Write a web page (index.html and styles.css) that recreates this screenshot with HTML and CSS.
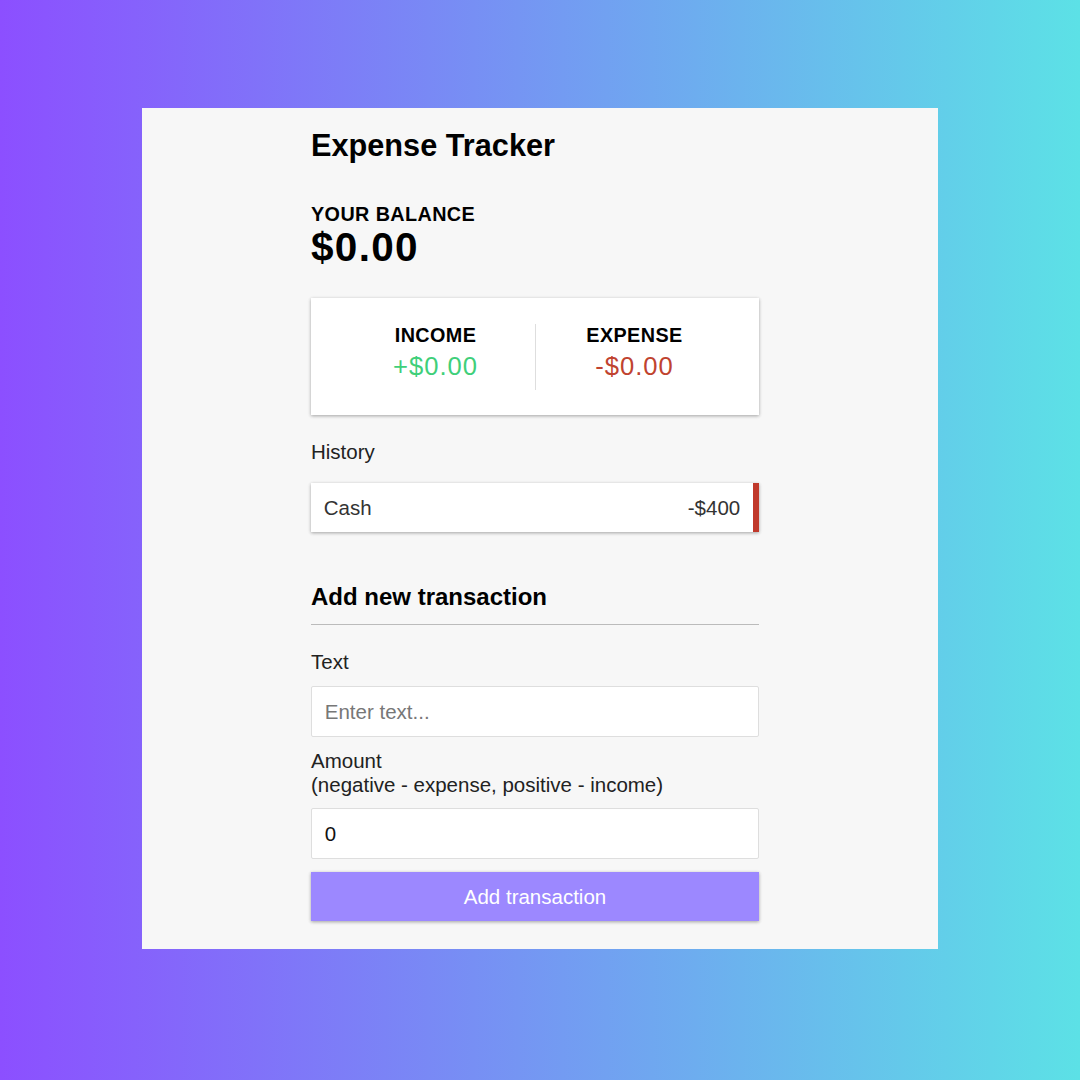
FILE: index.html
```html
<!DOCTYPE html>
<html lang="en">
<head>
<meta charset="utf-8">
<title>Expense Tracker</title>
<link rel="stylesheet" href="styles.css">
</head>
<body>
  <main class="panel">
    <div class="container">
      <h2 class="title">Expense Tracker</h2>
      <h4 class="balance-label">Your Balance</h4>
      <h1 class="balance">$0.00</h1>

      <div class="inc-exp">
        <div class="inc-exp-col">
          <h4 class="inc-exp-label">Income</h4>
          <p class="money plus">+$0.00</p>
        </div>
        <div class="inc-exp-col">
          <h4 class="inc-exp-label">Expense</h4>
          <p class="money minus">-$0.00</p>
        </div>
      </div>

      <div class="history-title">History</div>
      <ul class="list">
        <li class="item minus"><span>Cash</span><span>-$400</span></li>
      </ul>

      <h3 class="section-title">Add new transaction</h3>
      <form class="form">
        <label class="label label-text" for="text">Text</label>
        <input class="field" type="text" id="text" placeholder="Enter text...">
        <label class="label label-amount" for="amount">Amount <br>(negative - expense, positive - income)</label>
        <input class="field" type="number" id="amount" value="0">
        <button class="btn" type="button">Add transaction</button>
      </form>
    </div>
  </main>
</body>
</html>
```

FILE: styles.css
```css
* {
  box-sizing: border-box;
}

html, body {
  margin: 0;
  height: 1080px;
}

body {
  background: linear-gradient(to right, #8c4fff 0%, #5ce1e6 100%);
  padding: 108px 142px 131px;
  font-family: "Liberation Sans", Arial, sans-serif;
  font-size: 20.5px;
  color: #222;
}

.panel {
  background: #f7f7f7;
  height: 841px;
  padding: 20px 0 0 169px;
}

.container {
  width: 448px;
}

.title {
  margin: 0;
  font-size: 30.7px;
  font-weight: bold;
  color: #000;
  line-height: 35.3px;
}

.balance-label {
  margin: 41px 0 0;
  font-size: 19.8px;
  letter-spacing: 0.4px;
  text-transform: uppercase;
  line-height: 20.5px;
  color: #000;
}

.balance {
  margin: 2.5px 0 0;
  font-size: 40.5px;
  letter-spacing: 1.3px;
  line-height: 41px;
  color: #000;
}

.inc-exp {
  margin-top: 30px;
  background: #fff;
  box-shadow: 0 1px 4px rgba(0, 0, 0, 0.12), 0 1px 3px rgba(0, 0, 0, 0.24);
  padding: 25.6px;
  display: flex;
}

.inc-exp-col {
  flex: 1;
  text-align: center;
}

.inc-exp-col:first-child {
  border-right: 1px solid #dedede;
}

.inc-exp-label {
  margin: 0;
  font-size: 19.8px;
  letter-spacing: 0.4px;
  text-transform: uppercase;
  line-height: 23.55px;
  color: #000;
}

.money {
  margin: 4.6px 0 8.2px;
  font-size: 25.6px;
  letter-spacing: 1px;
  line-height: 29.4px;
}

.money.plus {
  color: #3fcf7a;
}

.money.minus {
  color: #c0432f;
}

.history-title {
  margin-top: 24.3px;
  line-height: 23.55px;
  color: #222;
}

.list {
  list-style: none;
  margin: 20.1px 0 0;
  padding: 0;
}

.item {
  background: #fff;
  box-shadow: 0 1px 4px rgba(0, 0, 0, 0.12), 0 1px 3px rgba(0, 0, 0, 0.24);
  color: #333;
  display: flex;
  justify-content: space-between;
  padding: 12.8px;
  line-height: 23.55px;
}

.item.minus {
  border-right: 6.4px solid #c0392b;
}

.section-title {
  margin: 50.4px 0 0;
  font-size: 24px;
  line-height: 27.6px;
  color: #000;
  padding-bottom: 13.3px;
  border-bottom: 1px solid #bbb;
}

.form {
  display: flex;
  flex-direction: column;
}

.label {
  display: block;
  line-height: 23.55px;
  color: #222;
}

.label-text {
  margin: 25.8px 0 12.3px;
}

.label-amount {
  margin: 11.8px 0 12px;
}

.field {
  display: block;
  width: 100%;
  border: 1px solid #dedede;
  border-radius: 2px;
  padding: 12.8px;
  font-family: "Liberation Sans", Arial, sans-serif;
  font-size: 20.5px;
  line-height: 23.55px;
  height: 51.2px;
  color: #111;
  background: #fff;
  outline: none;
}

.field::placeholder {
  color: #777;
}

.field::-webkit-outer-spin-button,
.field::-webkit-inner-spin-button {
  -webkit-appearance: none;
  margin: 0;
}

.btn {
  display: block;
  width: 100%;
  margin-top: 12.8px;
  padding: 12.8px;
  border: 0;
  background: #9c88ff;
  color: #fff;
  font-family: "Liberation Sans", Arial, sans-serif;
  font-size: 20.5px;
  line-height: 23.55px;
  box-shadow: 0 1px 4px rgba(0, 0, 0, 0.12), 0 1px 3px rgba(0, 0, 0, 0.24);
}
```
